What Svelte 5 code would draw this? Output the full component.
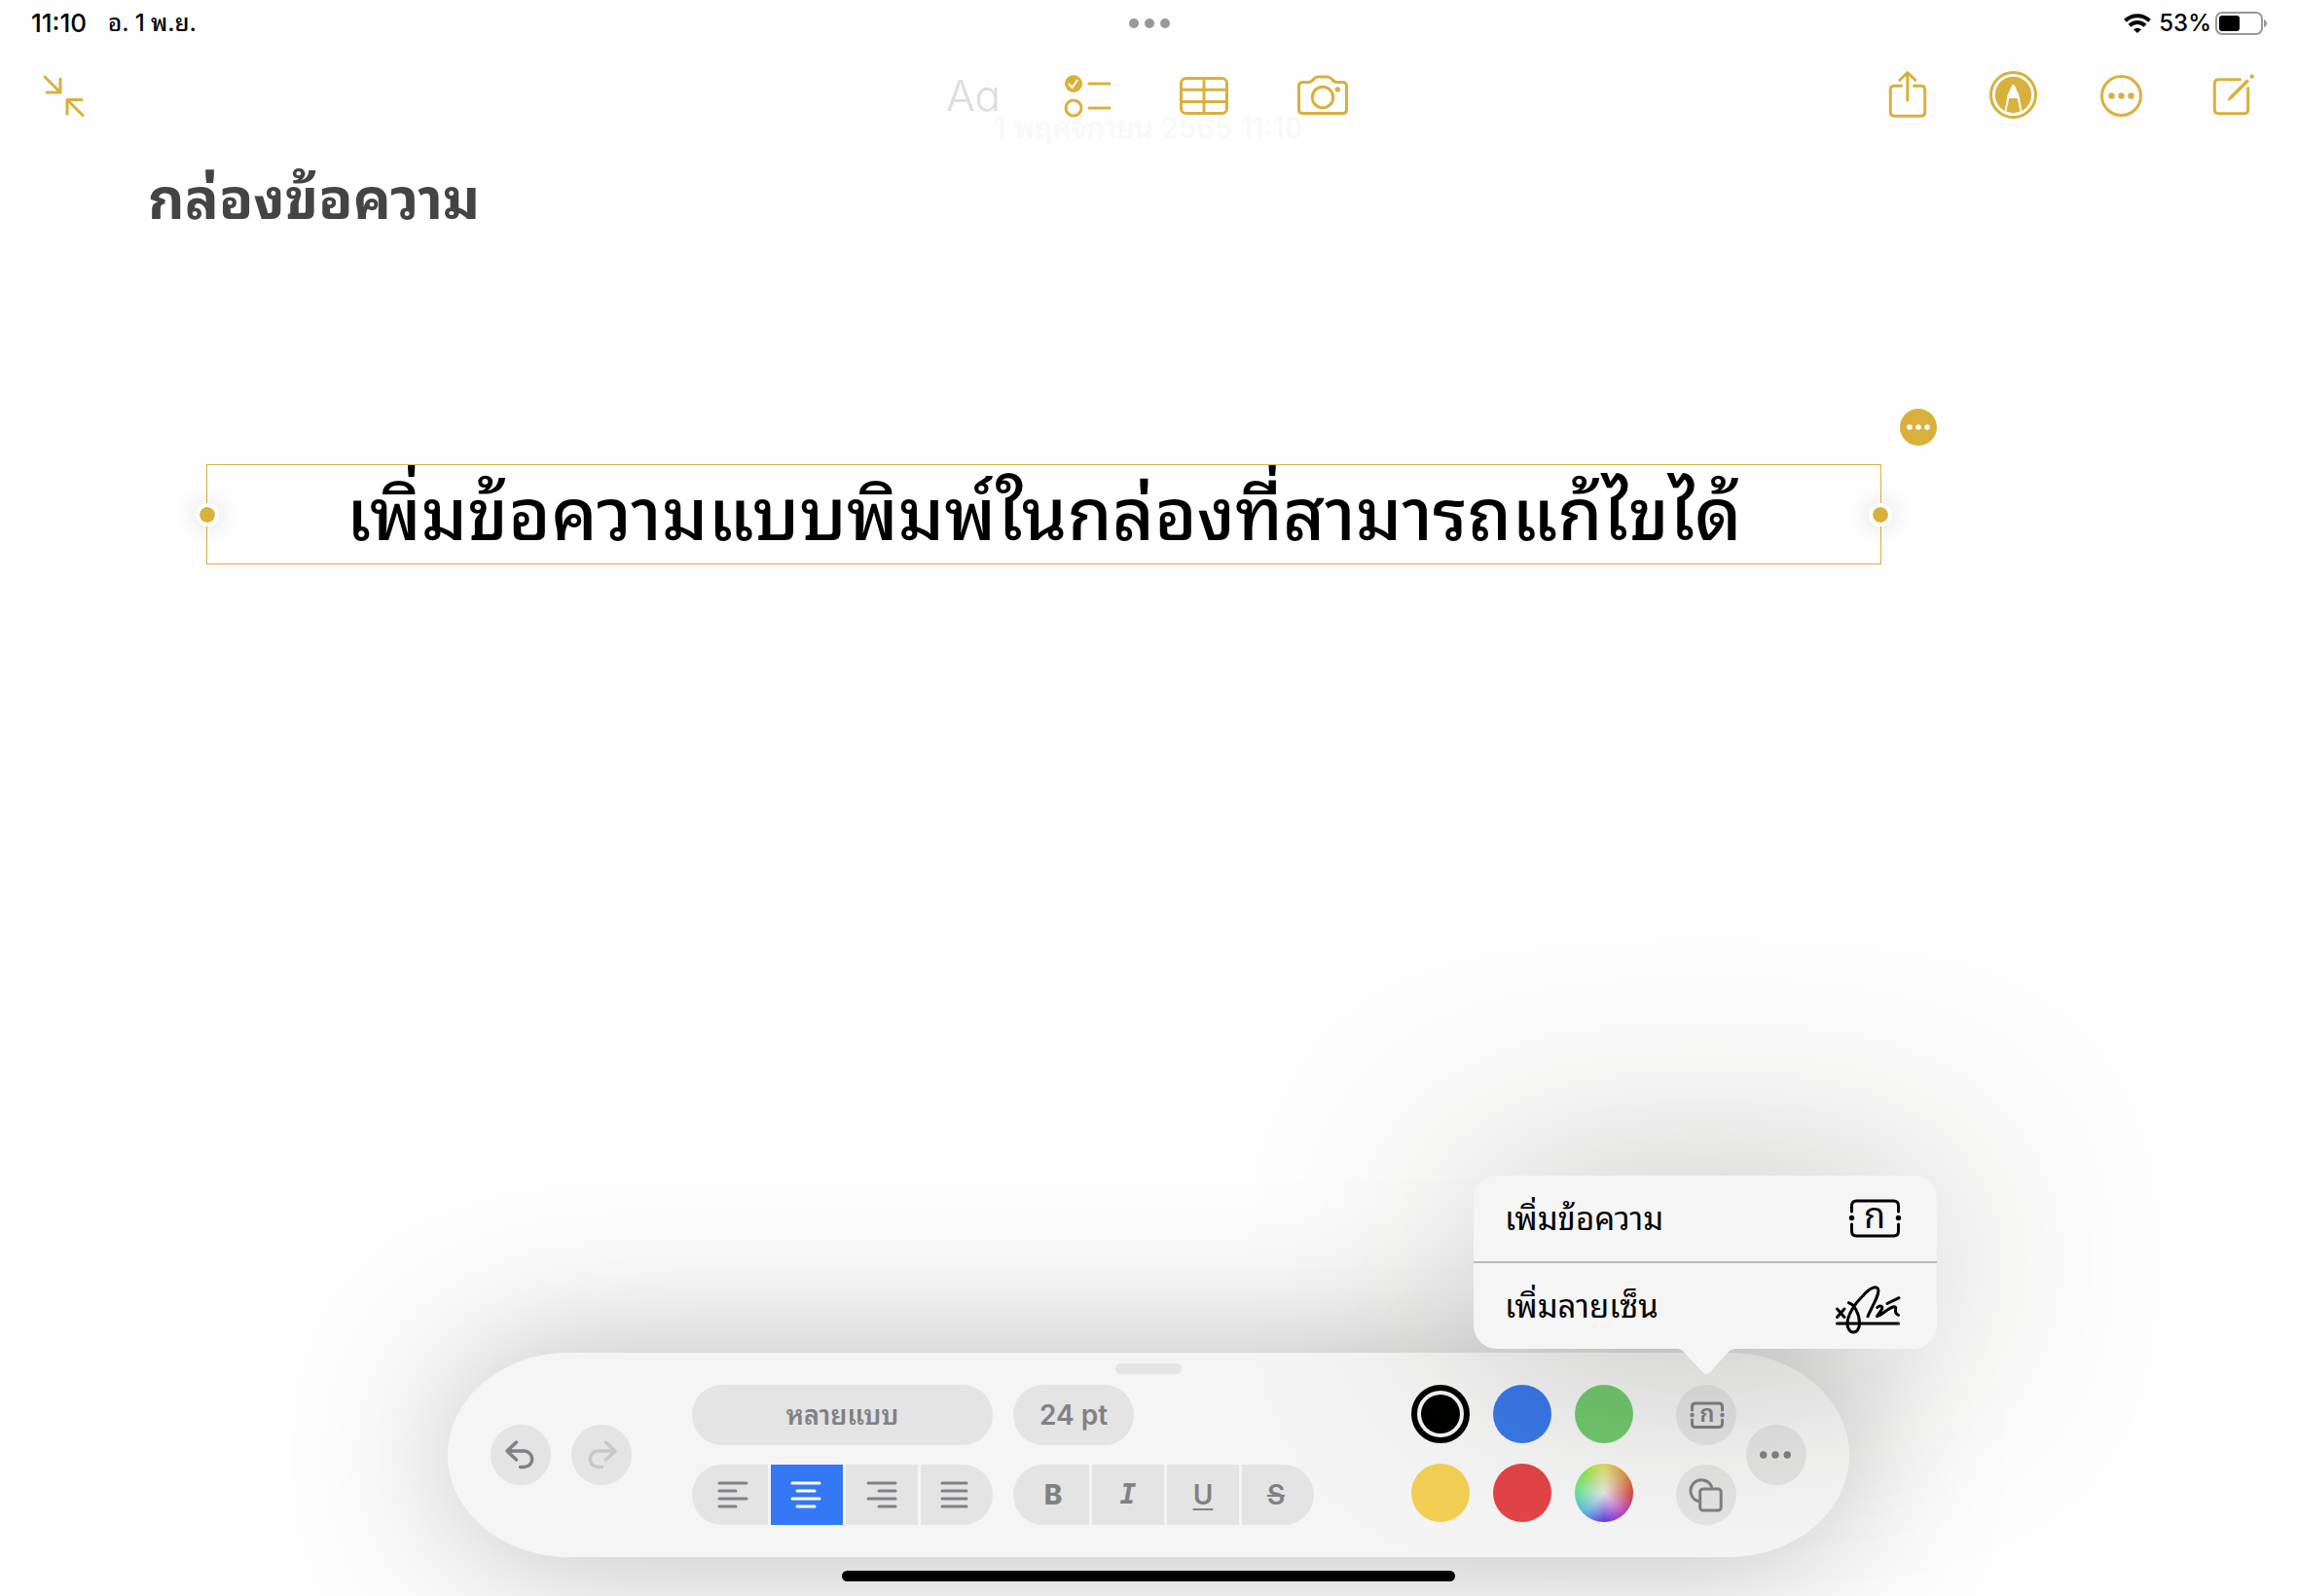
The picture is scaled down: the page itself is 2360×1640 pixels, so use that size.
<script lang="ts">
	type Swatch = { id: string; label: string };

	const alignments = [
		{ id: 'left', label: 'ชิดซ้าย', path: 'M3 3H31M3 11H20M3 19H31M3 27H20' },
		{ id: 'center', label: 'กึ่งกลาง', path: 'M1 3H29M6 11H24M1 19H29M6 27H24' },
		{ id: 'right', label: 'ชิดขวา', path: 'M2 3H30M13 11H30M2 19H30M13 27H30' },
		{ id: 'justify', label: 'เต็มแนว', path: 'M3 3H28M3 11H28M3 19H28M3 27H28' }
	];

	const styles = [
		{ id: 'bold', label: 'ตัวหนา', glyph: 'B' },
		{ id: 'italic', label: 'ตัวเอียง', glyph: 'I' },
		{ id: 'underline', label: 'ขีดเส้นใต้', glyph: 'U' },
		{ id: 'strike', label: 'ขีดทับ', glyph: 'S' }
	];

	const swatches: Swatch[] = [
		{ id: 'black', label: 'ดำ' },
		{ id: 'blue', label: 'น้ำเงิน' },
		{ id: 'green', label: 'เขียว' },
		{ id: 'yellow', label: 'เหลือง' },
		{ id: 'red', label: 'แดง' },
		{ id: 'wheel', label: 'สีอื่น' }
	];

	let align = $state('center');
	let color = $state('black');
	let active = $state<string[]>([]);
	let menuOpen = $state(true);
	let boxText = $state('เพิ่มข้อความแบบพิมพ์ในกล่องที่สามารถแก้ไขได้');

	function toggleStyle(id: string) {
		active = active.includes(id) ? active.filter((s) => s !== id) : [...active, id];
	}
</script>

<div class="screen">
	<div class="status">
		<div class="status-side">
			<span class="time">11:10</span>
			<span>อ. 1 พ.ย.</span>
		</div>
		<svg class="dots" width="44" height="12" viewBox="0 0 44 12" fill="#999">
			<circle cx="6" cy="6" r="5" />
			<circle cx="22" cy="6" r="5" />
			<circle cx="38" cy="6" r="5" />
		</svg>
		<div class="status-side end">
			<svg width="28" height="20" viewBox="0 0 28 20" fill="none" stroke="#000" stroke-width="4">
				<path d="M1.5 7.3A18 18 0 0 1 26.5 7.3" />
				<path d="M6 12.2A11.5 11.5 0 0 1 22 12.2" />
				<path d="M10 16.2A6 6 0 0 1 18 16.2L14 20Z" fill="#000" stroke="none" />
			</svg>
			<span class="percent">53%</span>
			<svg width="54" height="24" viewBox="0 0 54 24">
				<rect x="1" y="1" width="47" height="22" rx="6" fill="none" stroke="#999" stroke-width="2" />
				<rect x="4" y="4" width="21" height="16" rx="3" fill="#000" />
				<path d="M50 8Q53 9 53 12T50 16Z" fill="#999" />
			</svg>
		</div>
	</div>

	<header class="toolbar">
		<div class="tools">
			<button class="tool" aria-label="ย่อ">
				<svg viewBox="0 0 56 48">
					<path d="M9 5L25 21M25 7V21H11M32 43V28.500H47M32 28.500L48 44.500" />
				</svg>
			</button>
		</div>
		<div class="tools">
			<button class="tool format" disabled>Aa</button>
			<button class="tool" aria-label="รายการตรวจสอบ">
				<svg viewBox="0 0 56 48">
					<circle cx="11" cy="12" r="9" class="solid" />
					<path d="M6.400 12.500L9.700 16L14.800 8.500" class="tick" />
					<circle cx="11" cy="37" r="8" />
					<path d="M27 12H48M27 37H48" />
				</svg>
			</button>
			<button class="tool" aria-label="ตาราง">
				<svg viewBox="0 0 56 48">
					<rect x="1.500" y="6.500" width="47" height="36" rx="5" />
					<path d="M25 6.500V42.500M1.500 18.300H48.500M1.500 30.500H48.500" />
				</svg>
			</button>
			<button class="tool" aria-label="กล้อง">
				<svg viewBox="0 0 56 48">
					<path d="M6.500 10.500H12.500C15 10.500 16.500 9 18 7C19.300 5.500 20 5 22 5H32C34 5 34.700 5.500 36 7C37.500 9 39 10.500 41.500 10.500H47.500Q51.500 10.500 51.500 14.500V38.500Q51.500 42.500 47.500 42.500H6.500Q2.500 42.500 2.500 38.500V14.500Q2.500 10.500 6.500 10.500Z" />
					<circle cx="27" cy="26" r="10.700" />
					<circle cx="42.300" cy="18" r="2.700" class="solid" />
				</svg>
			</button>
		</div>
		<div class="tools end">
			<button class="tool" aria-label="แชร์">
				<svg viewBox="0 0 56 48">
					<path d="M22.500 14.200H15.500Q11.300 14.200 11.300 18V41Q11.300 45.300 15.500 45.300H42.500Q46.700 45.300 46.700 41V18Q46.700 14.200 42.500 14.200H35.500" />
					<path d="M28.800 29V1M20.800 8.300L28.800 0.500L36.800 8.300" />
				</svg>
			</button>
			<button class="tool" aria-label="มาร์กอัป" aria-pressed="true">
				<svg viewBox="0 0 56 48">
					<circle cx="25.500" cy="23.500" r="23" />
					<circle cx="25.500" cy="23.500" r="18.700" class="solid" />
					<path d="M24.300 13.500Q25.500 12 26.700 13.500L31.500 24L34.600 42H16.400L19.500 24Z" class="nib" />
					<path d="M21.300 27H29.700L32.600 40.600Q25.500 43.500 18.400 40.600Z" class="solid" />
				</svg>
			</button>
			<button class="tool" aria-label="เพิ่มเติม">
				<svg viewBox="0 0 56 48">
					<circle cx="24.500" cy="24.500" r="20" />
					<g class="solid">
						<circle cx="14.500" cy="24.500" r="3.200" />
						<circle cx="24.500" cy="24.500" r="3.200" />
						<circle cx="34.500" cy="24.500" r="3.200" />
					</g>
				</svg>
			</button>
			<button class="tool" aria-label="โน้ตใหม่">
				<svg viewBox="0 0 56 48">
					<path d="M34.500 7.700H12.500Q8.300 7.700 8.300 12V38.500Q8.300 42.700 12.500 42.700H38.500Q42.700 42.700 42.700 38.500V16.500" />
					<path d="M21.300 30L23.500 25.300L41.500 7.300L44 9.800L26 27.800Z" class="solid" />
					<circle cx="46.700" cy="4.500" r="2.200" class="solid" />
				</svg>
			</button>
		</div>
	</header>

	<main class="note">
		<p class="date">1 พฤศจิกายน 2565 11:10</p>
		<h1>กล่องข้อความ</h1>
		<div class="text-box">
			<input type="text" aria-label="กล่องข้อความ" bind:value={boxText} />
			<span class="handle start"></span>
			<span class="handle stop"></span>
			<button class="box-more" aria-label="ตัวเลือกกล่องข้อความ">
				<svg width="38" height="38" viewBox="0 0 38 38" fill="#fff">
					<circle cx="10" cy="19" r="2.800" />
					<circle cx="19" cy="19" r="2.800" />
					<circle cx="28" cy="19" r="2.800" />
				</svg>
			</button>
		</div>
	</main>

	<footer class="dock">
		<div class="palette">
			<span class="grabber"></span>

			<div class="history">
				<button class="round" aria-label="เลิกทำ">
					<svg viewBox="0 0 62 62">
						<path d="M26.500 18L17 27L26.500 36M17 27H34.500A8.200 8.200 0 0 1 34.500 43.400H30.500" />
					</svg>
				</button>
				<button class="round" aria-label="ทำซ้ำ" disabled>
					<svg viewBox="0 0 62 62">
						<path d="M35.500 18L45 27L35.500 36M45 27H27.500A8.200 8.200 0 0 0 27.500 43.400H31.500" />
					</svg>
				</button>
			</div>

			<div class="text-tools">
				<button class="pill font">หลายแบบ</button>
				<button class="pill size">24 pt</button>
				<div class="segments">
					{#each alignments as item}
						<button
							class:selected={align === item.id}
							aria-label={item.label}
							aria-pressed={align === item.id}
							onclick={() => (align = item.id)}
						>
							<svg width="32" height="30" viewBox="0 0 32 30"><path d={item.path} /></svg>
						</button>
					{/each}
				</div>
				<div class="segments">
					{#each styles as item}
						<button
							class={item.id}
							class:selected={active.includes(item.id)}
							aria-label={item.label}
							aria-pressed={active.includes(item.id)}
							onclick={() => toggleStyle(item.id)}
						>{item.glyph}</button>
					{/each}
				</div>
			</div>

			<div class="swatches">
				{#each swatches as s}
					<button
						class="swatch {s.id}"
						class:ring={color === s.id}
						aria-label={s.label}
						aria-pressed={color === s.id}
						onclick={() => (color = s.id)}
					></button>
				{/each}
			</div>

			<div class="inserts">
				<div class="anchor">
					<button class="round" aria-label="เพิ่มข้อความหรือลายเซ็น" aria-expanded={menuOpen} onclick={() => (menuOpen = !menuOpen)}>
						<svg viewBox="0 0 62 62">
							<path d="M16.500 26V22.500Q16.500 19 20 19H44Q47.500 19 47.500 22.500V26M16.500 36V40Q16.500 43.500 20 43.500H44Q47.500 43.500 47.500 40V36" />
							<circle cx="16.500" cy="31" r="2.200" class="ink" />
							<circle cx="47.500" cy="31" r="2.200" class="ink" />
							<text x="32" y="38" font-size="24" font-weight="600" class="ink" text-anchor="middle">ก</text>
						</svg>
					</button>
					{#if menuOpen}
						<div class="popover">
							<button>
								<span>เพิ่มข้อความ</span>
								<svg viewBox="0 0 66 50">
									<path d="M16.500 18V12Q16.500 7 21.500 7H59.500Q64.500 7 64.500 12V18M16.500 31V38Q16.500 43 21.500 43H59.500Q64.500 43 64.500 38V31" />
									<circle cx="16.500" cy="24.500" r="2.700" class="ink" />
									<circle cx="64.500" cy="24.500" r="2.700" class="ink" />
									<text x="40" y="35" font-size="36" class="ink" text-anchor="middle">ก</text>
								</svg>
							</button>
							<button>
								<span>เพิ่มลายเซ็น</span>
								<svg viewBox="0 0 66 50">
									<path d="M1.500 28L9 36.500M9 28L1.500 36.500M1.500 43H64.500" />
									<path d="M13.400 21.700C19 23 24.500 33 24.500 43C24.500 55 12 55 12 43C12 35 19 23 28 14.500C36 5 42 4.500 43.500 7.500C46 12 37 26 33 35.700" />
									<path d="M42.700 26.500C46 23.500 49.500 25.500 47 29L42.500 35.500C48 34.500 54 26.500 60 25.700C64.500 25.500 58 32 64.500 34.300" />
									<path d="M53 22.500L65 16.700" />
								</svg>
							</button>
							<svg class="tail" viewBox="0 0 58 27">
								<path d="M0 0Q3 0 6 3L25 24Q29 28 33 24L52 3Q55 0 58 0Z" fill="#f5f5f5" stroke="none" />
							</svg>
						</div>
					{/if}
				</div>
				<button class="round" aria-label="เพิ่มรูปร่าง">
					<svg viewBox="0 0 62 62">
						<path d="M36.500 22.500A11.200 11.200 0 1 0 22.500 37.500" />
						<rect x="24.700" y="25" width="21.500" height="22" rx="3" />
					</svg>
				</button>
			</div>

			<button class="round" aria-label="เพิ่มเติม">
				<svg viewBox="0 0 62 62">
					<g class="ink">
						<circle cx="17.700" cy="31" r="3.700" />
						<circle cx="30" cy="31" r="3.700" />
						<circle cx="42.300" cy="31" r="3.700" />
					</g>
				</svg>
			</button>
		</div>
		<div class="home"></div>
	</footer>
</div>

<style>
	:global(body) {
		background: #fefefe;
	}

	.screen {
		--gold: #dab03d;
		--ink: #808085;
		display: flex;
		flex-direction: column;
		min-height: 100vh;
		overflow: hidden;
		font-family: Inter, "Noto Sans Thai Looped", "Noto Sans Thai", Loma, sans-serif;
		line-height: 1;
		color: #000;
	}

	button {
		margin: 0;
		padding: 0;
		border: 0;
		background: none;
		font: inherit;
		color: inherit;
	}

	svg {
		display: block;
		overflow: visible;
	}

	.status,
	.toolbar {
		display: grid;
		grid-template-columns: 1fr auto 1fr;
		align-items: center;
	}

	.status {
		height: 48px;
		padding: 0 30px 0 32px;
		font-size: 24px;
		font-weight: 500;
	}

	.status-side {
		display: flex;
		align-items: center;
		gap: 22px;
	}

	.status-side.end {
		justify-content: flex-end;
		gap: 4px;
	}

	.time {
		font-size: 26px;
	}

	.percent {
		padding-left: 4px;
	}

	.toolbar {
		position: relative;
		z-index: 1;
		padding: 26px 37px 0;
	}

	.tools {
		display: flex;
		gap: 64px;
	}

	.tools.end {
		justify-content: flex-end;
		gap: 56px;
	}

	.tool {
		width: 56px;
		height: 48px;
	}

	.tool svg {
		width: 56px;
		height: 48px;
		fill: none;
		stroke: var(--gold);
		stroke-width: 3;
		stroke-linecap: round;
		stroke-linejoin: round;
	}

	.tool .solid {
		fill: var(--gold);
		stroke: none;
	}

	.tool .tick {
		stroke: #fff;
		stroke-width: 2;
	}

	.tool .nib {
		fill: #fff;
		stroke: none;
	}

	.format {
		font-size: 44px;
		font-weight: 300;
		line-height: 48px;
		color: #ddd;
		font-feature-settings: "cv11";
	}

	.note {
		flex: 1;
	}

	.date {
		margin: 0;
		font-size: 30px;
		line-height: 18px;
		text-align: center;
		color: #f8f8f8;
	}

	h1 {
		margin: 20px 152px 0;
		font-size: 58px;
		font-weight: 700;
		line-height: 88px;
		color: #444;
	}

	.text-box {
		position: relative;
		margin: 229px 427px 0 212px;
		border: 1px solid var(--gold);
	}

	.text-box input {
		display: block;
		box-sizing: border-box;
		width: 100%;
		height: 101px;
		padding: 0;
		border: 0;
		outline: 0;
		background: none;
		font: inherit;
		font-size: 74px;
		font-weight: 500;
		line-height: 101px;
		text-align: center;
		color: #000;
	}

	.handle {
		position: absolute;
		top: 50%;
		width: 16px;
		height: 16px;
		border: 4px solid #fff;
		border-radius: 50%;
		background: var(--gold);
		background-clip: padding-box;
		box-shadow: 0 0 24px rgba(0, 0, 0, 0.16);
		transform: translate(-50%, -50%);
	}

	.handle.start {
		left: 0;
	}

	.handle.stop {
		left: 100%;
	}

	.box-more {
		position: absolute;
		right: -58px;
		bottom: calc(100% + 20px);
		border-radius: 50%;
		background: var(--gold);
	}

	.dock {
		display: flex;
		flex-direction: column;
		align-items: center;
		gap: 14px;
		padding-bottom: 15px;
	}

	.palette {
		position: relative;
		z-index: 0;
		display: flex;
		align-items: center;
		box-sizing: border-box;
		width: min(1440px, 100%);
		padding: 33px 44px;
		color: var(--ink);
	}

	.palette::before {
		content: "";
		position: absolute;
		inset: 0;
		z-index: -1;
		border-radius: 124px / 105px;
		background: #f5f5f5;
		filter: drop-shadow(0 0 80px rgba(0, 0, 0, 0.27));
	}

	.grabber {
		position: absolute;
		top: 11px;
		left: 50%;
		width: 68px;
		height: 11px;
		border-radius: 6px;
		background: #e4e4e4;
		transform: translateX(-50%);
	}

	.history {
		display: flex;
		gap: 21px;
	}

	.round {
		width: 62px;
		height: 62px;
		border-radius: 50%;
		background: #e4e4e4;
	}

	.round:disabled {
		color: #c8c8ca;
	}

	.round svg {
		width: 62px;
		height: 62px;
		fill: none;
		stroke: currentColor;
		stroke-width: 3;
		stroke-linecap: round;
		stroke-linejoin: round;
	}

	.history .round svg {
		stroke-width: 3.5;
	}

	svg .ink {
		fill: currentColor;
		stroke: none;
	}

	.text-tools {
		display: grid;
		grid-template-columns: 309px 309px;
		gap: 20px 21px;
		margin-left: 62px;
	}

	.pill {
		height: 62px;
		border-radius: 31px;
		background: #e4e4e4;
		font-weight: 600;
	}

	.font {
		font-size: 27px;
	}

	.size {
		width: 124px;
		font-size: 28px;
	}

	.segments {
		display: grid;
		grid-template-columns: 78px 74px 74px 1fr;
		gap: 3px;
		border-radius: 31px;
		overflow: hidden;
	}

	.segments button {
		display: flex;
		align-items: center;
		justify-content: center;
		height: 62px;
		background: #e4e4e4;
		font-size: 28px;
		font-weight: 600;
	}

	.segments button:first-child {
		padding-left: 4px;
	}

	.segments button:last-child {
		padding-right: 4px;
	}

	.segments svg {
		fill: none;
		stroke: currentColor;
		stroke-width: 3;
		stroke-linecap: round;
	}

	.segments .selected {
		background: #3478f6;
		color: #fff;
	}

	.segments .bold {
		font-weight: 800;
	}

	.segments .italic {
		font-family: "DejaVu Sans Mono", monospace;
		font-style: italic;
	}

	.segments .underline {
		text-decoration: underline;
		text-decoration-thickness: 2px;
		text-underline-offset: 4px;
	}

	.segments .strike {
		text-decoration: line-through;
		text-decoration-thickness: 2px;
	}

	.swatches {
		display: grid;
		grid-template-columns: repeat(3, 60px);
		gap: 21px 24px;
		align-self: flex-start;
		margin-left: auto;
	}

	.swatch {
		box-sizing: border-box;
		height: 60px;
		border-radius: 50%;
	}

	.swatch.ring {
		padding: 4px;
		border: 6px solid #000;
		background-clip: content-box;
	}

	.black {
		background-color: #000;
	}

	.blue {
		background-color: #3978e8;
	}

	.green {
		background-color: #71c86e;
	}

	.yellow {
		background-color: #f3d054;
	}

	.red {
		background-color: #e34447;
	}

	.wheel {
		background:
			radial-gradient(circle, #e6e6e6 0, rgba(230, 230, 230, 0) 75%),
			conic-gradient(#e2da50, #d8903a 45deg, #d23a28 90deg, #b934c4 135deg, #5330e0 180deg, #4fb0e4 225deg, #58e48c 270deg, #84e43e 315deg, #e2da50);
	}

	.inserts {
		display: grid;
		gap: 20px;
		margin: 0 10px 0 44px;
	}

	.anchor {
		position: relative;
		height: 62px;
	}

	/* sits over the palette, so its shadow also falls on the swatches */
	.popover {
		position: absolute;
		right: -206px;
		bottom: calc(100% + 37px);
		z-index: 1;
		width: 476px;
		border-radius: 24px;
		background: #f5f5f5;
		filter: drop-shadow(0 0 110px rgba(20, 20, 10, 0.26));
		color: #000;
	}

	.popover button {
		display: flex;
		align-items: center;
		justify-content: space-between;
		width: 100%;
		height: 88px;
		padding: 0 38px 0 32px;
		font-size: 33px;
	}

	.popover button + button {
		border-top: 2px solid #bbb;
		height: 90px;
	}

	.popover svg {
		width: 66px;
		height: 50px;
		fill: none;
		stroke: #000;
		stroke-width: 3;
		stroke-linecap: round;
		stroke-linejoin: round;
	}

	.popover .ink {
		stroke: none;
		fill: #000;
	}

	.popover .tail {
		position: absolute;
		top: 100%;
		right: 208px;
		width: 58px;
		height: 27px;
	}

	.home {
		width: 630px;
		height: 11px;
		border-radius: 6px;
		background: #000;
	}
</style>
